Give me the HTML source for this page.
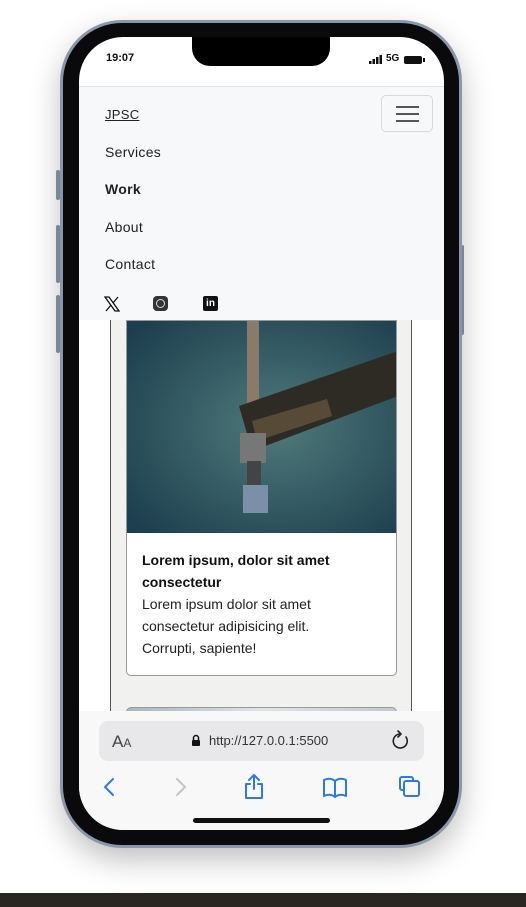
<!DOCTYPE html>
<html><head><meta charset="utf-8"><style>
*{margin:0;padding:0;box-sizing:border-box}
body{width:526px;height:907px;background:#fff;position:relative;overflow:hidden;font-family:"Liberation Sans",sans-serif}
.band{position:absolute;left:0;top:893px;width:526px;height:14px;background:#2b2622}
.frame{position:absolute;left:60px;top:20px;width:402px;height:828px;border-radius:62px;background:#0a0a0c;border:3px solid #8a97aa;box-shadow:0 12px 30px rgba(0,0,0,.25)}
.btn{position:absolute;background:#8a97aa;width:4px;border-radius:2px}
.screen{position:absolute;left:79px;top:37px;width:365px;height:793px;border-radius:44px;overflow:hidden;background:#fff}
.notch{position:absolute;left:113px;top:0;width:138px;height:29px;background:#000;border-radius:0 0 18px 18px}
.abs{position:absolute}
.nav{position:absolute;left:0;top:49px;width:365px;height:234px;background:#f7f8fa;border-top:1px solid #e2e4e8}
.nav a{position:absolute;left:26px;font-size:14px;color:#222;text-decoration:none;letter-spacing:.3px}
</style></head><body>
<div class="band"></div>
<div class="btn" style="left:56px;top:170px;height:30px"></div>
<div class="btn" style="left:56px;top:225px;height:58px"></div>
<div class="btn" style="left:56px;top:295px;height:58px"></div>
<div class="btn" style="left:460px;top:245px;height:90px"></div>
<div class="frame"></div>
<div class="screen">
 <div class="notch"></div>
 <div class="abs" style="left:27px;top:15px;font-size:11px;font-weight:bold;color:#111">19:07</div>
 <svg class="abs" style="left:290px;top:18px" width="14" height="9"><rect x="0" y="6" width="2.5" height="3" fill="#111"/><rect x="3.5" y="4" width="2.5" height="5" fill="#111"/><rect x="7" y="2" width="2.5" height="7" fill="#111"/><rect x="10.5" y="0" width="2.5" height="9" fill="#111"/></svg>
 <div class="abs" style="left:307px;top:16px;font-size:10px;font-weight:bold;color:#111">5G</div>
 <div class="abs" style="left:325px;top:19px;width:18px;height:8px;background:#111;border-radius:2px"></div>
 <div class="abs" style="left:344px;top:21px;width:2px;height:4px;background:#111"></div>
 <div class="abs" style="left:31px;top:283px;width:302px;height:400px;border-left:1px solid #555;border-right:1px solid #555;background:#f1f2f0"></div>
 <div class="abs" style="left:47px;top:283px;width:271px;height:356px;background:#fff;border:1px solid #999;border-radius:0 0 5px 5px;overflow:hidden">
  <svg width="271" height="212" style="display:block">
   <defs><radialGradient id="g" cx="55%" cy="50%" r="70%"><stop offset="0" stop-color="#4f7a7a"/><stop offset="1" stop-color="#1c3e4e"/></radialGradient></defs>
   <rect width="271" height="212" fill="url(#g)"/>
   <rect x="120" y="0" width="12" height="120" fill="#8a7a6a"/>
   <polygon points="112,85 271,30 271,75 125,130" fill="#2e2a24"/>
   <polygon points="125,100 200,78 205,95 130,120" fill="#6a5a40" opacity=".7"/>
   <rect x="113" y="112" width="26" height="30" fill="#777"/>
   <rect x="120" y="140" width="14" height="25" fill="#444"/>
   <rect x="116" y="164" width="25" height="28" fill="#7b8fa8"/>
  </svg>
  <div style="padding:16px 15px 0">
   <div style="font-size:14px;font-weight:bold;color:#111;line-height:22px">Lorem ipsum, dolor sit amet consectetur</div>
   <div style="font-size:14px;color:#222;line-height:22px;width:195px">Lorem ipsum dolor sit amet consectetur adipisicing elit. Corrupti, sapiente!</div>
  </div>
 </div>
 <div class="abs" style="left:47px;top:670px;width:271px;height:20px;border:1px solid #999;border-radius:5px 5px 0 0;background:linear-gradient(90deg,#a8b4c0,#dfe4e8,#c0c8d0)"></div>
 <div class="nav">
  <a style="top:20px;text-decoration:underline;font-size:13px">JPSC</a>
  <a style="top:57px">Services</a>
  <a style="top:94px;font-weight:bold">Work</a>
  <a style="top:132px">About</a>
  <a style="top:169px">Contact</a>
  <div class="abs" style="left:302px;top:8px;width:52px;height:37px;border:1px solid #d6d8dc;border-radius:5px">
   <div class="abs" style="left:14px;top:10px;width:23px;height:2px;background:#555"></div>
   <div class="abs" style="left:14px;top:17px;width:23px;height:2px;background:#555"></div>
   <div class="abs" style="left:14px;top:24px;width:23px;height:2px;background:#555"></div>
  </div>
  <svg class="abs" style="left:25px;top:209px" width="16" height="16" stroke="#111" stroke-width="1.3" fill="none"><path d="M1 1 L5 1 L15 15 L11 15 Z"/><path d="M14 1 L9 7 M2 15 L7 9"/></svg>
  <div class="abs" style="left:74px;top:209px;width:15px;height:15px;border-radius:4px;background:#333"><div class="abs" style="left:3px;top:3px;width:9px;height:9px;border:1.5px solid #ddd;border-radius:50%"></div></div>
  <div class="abs" style="left:124px;top:209px;width:15px;height:15px;border-radius:2px;background:#111;color:#fff;font-size:10px;font-weight:bold;line-height:16px;text-align:center">in</div>
 </div>
 <div class="abs" style="left:0;top:674px;width:365px;height:120px;background:#f8f8f8"></div>
 <div class="abs" style="left:20px;top:684px;width:325px;height:40px;background:#e8e8ea;border-radius:9px"></div>
 <div class="abs" style="left:33px;top:695px;font-size:17px;color:#444">A<span style="font-size:12px">A</span></div>
 <svg class="abs" style="left:112px;top:697px" width="10" height="12"><path d="M2.5 6 V4 a2.5 2.5 0 0 1 5 0 V6" stroke="#111" stroke-width="1.5" fill="none"/><rect x="1" y="6" width="8" height="6" rx="1" fill="#111"/></svg>
 <div class="abs" style="left:130px;top:696px;font-size:13px;color:#333">http://127.0.0.1:5500</div>
 <svg class="abs" style="left:313px;top:693px" width="18" height="20" fill="none" stroke="#222" stroke-width="1.6" stroke-linecap="round"><path d="M8 4 A7 7 0 1 0 14 7"/><path d="M6 1 L9 4 L6 7"/></svg>
 <svg class="abs" style="left:0;top:735px" width="365" height="40" fill="none" stroke-width="2" stroke-linecap="round" stroke-linejoin="round">
  <path d="M34 7 L26 15 L34 23" stroke="#2d7be0"/>
  <path d="M98 7 L106 15 L98 23" stroke="#c4c4c8"/>
  <path d="M171 12 h-4 v14 h16 v-14 h-4 M175 3 v14 M170 8 l5 -5 l5 5" stroke="#2d7be0"/>
  <path d="M245 8 q6 -3 11 1 q5 -4 11 -1 v16 q-6 -3 -11 1 q-5 -4 -11 -1 z M256 9 v16" stroke="#2d7be0"/>
  <rect x="321" y="5" width="13" height="13" rx="2" stroke="#2d7be0"/>
  <rect x="325" y="9" width="15" height="15" rx="2" stroke="#2d7be0" fill="#f8f8f8"/>
 </svg>
 <div class="abs" style="left:114px;top:781px;width:137px;height:5px;background:#111;border-radius:3px"></div>
</div>
</body></html>
